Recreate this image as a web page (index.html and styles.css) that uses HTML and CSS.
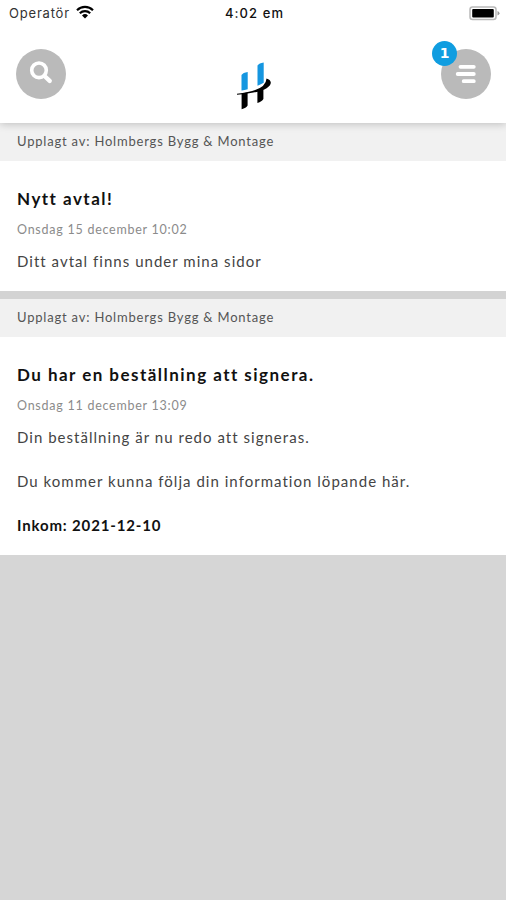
FILE: index.html
```html
<!DOCTYPE html>
<html lang="sv">
<head>
    <meta charset="UTF-8">
    <meta name="viewport" content="width=device-width, initial-scale=1.0">
    <title>Holmbergs Bygg &amp; Montage</title>
    <link rel="stylesheet" href="styles.css">
</head>
<body>
    <header class="header">
        <!-- Statusrad -->
        <div class="statusbar">
            <div class="status-left">
                <span class="operator">Operatör</span>
                <svg class="wifi" width="18" height="14" viewBox="0 0 18 14">
                    <path d="M1 5.2a11.500 11.500 0 0 1 16 0M3.800 8.200a7.500 7.500 0 0 1 10.400 0" fill="none" stroke="#000" stroke-width="2.2"/>
                    <path d="M9 13.500l-3-3.100a4.300 4.300 0 0 1 6 0z"/>
                </svg>
            </div>
            <div class="clock">4:02 em</div>
            <div class="status-right">
                <svg width="31" height="15" viewBox="0 0 31 15">
                    <rect x="1" y="1" width="26" height="12.5" rx="2.5" fill="#fff" stroke="#b9b9b9" stroke-width="1.5"/>
                    <rect x="3.2" y="3" width="21.6" height="8.6" rx="1"/>
                    <path d="M28.5 5v4.5q2-.8 2-2.250T28.500 5z" fill="#999"/>
                </svg>
            </div>
        </div>
        <div class="navbar">
            <button class="round-button" aria-label="Sök">
                <svg width="50" height="50" viewBox="0 0 50 50" fill="none" stroke="#fff">
                    <circle cx="23" cy="21.300" r="7.300" stroke-width="3.6"/>
                    <path d="M28.500 27l5.200 4.900" stroke-width="4.4" stroke-linecap="round"/>
                </svg>
            </button>
            <svg class="logo" width="36" height="48" viewBox="0 0 36 48">
                <path d="M5.500 13q1.600-2.400 6.200-3v17.200q-3 .8-6.200 1.300zM21.500 3.400q1.600-2.400 6.200-3v20.400q-2.700 1.500-6.200 2.900z" fill="#1596e0"/>
                <path d="M1 31.700Q30 29 30.500 16.500Q34.500 17.500 34.800 20.500C35 25.500 24 31.500 1 32.700z"/>
                <path d="M5.600 31.500l6-.9v13q-1.500 2.600-6 3.700zM21.400 28l6-2.600v11.600q-1.500 2.800-6 3.900z"/>
            </svg>
            <button class="round-button" aria-label="Meny">
                <svg width="50" height="50" viewBox="0 0 50 50" stroke="#fff" stroke-width="3.8" stroke-linecap="round">
                    <path d="M19.500 17.800h13.300M16.700 25h16.100M22.700 32.200h10.100"/>
                </svg>
                <span class="badge">1</span>
            </button>
        </div>
    </header>

    <main class="feed">
        <article class="post">
            <div class="post-author">Upplagt av: Holmbergs Bygg &amp; Montage</div>
            <div class="post-content">
                <h2 class="post-title">Nytt avtal!</h2>
                <div class="post-date">Onsdag 15 december 10:02</div>
                <p class="post-text">Ditt avtal finns under mina sidor</p>
            </div>
        </article>
        <article class="post">
            <div class="post-author">Upplagt av: Holmbergs Bygg &amp; Montage</div>
            <div class="post-content">
                <h2 class="post-title">Du har en beställning att signera.</h2>
                <div class="post-date">Onsdag 11 december 13:09</div>
                <p class="post-text">Din beställning är nu redo att signeras.</p>
                <p class="post-text">Du kommer kunna följa din information löpande här.</p>
                <p class="post-text received">Inkom: 2021-12-10</p>
            </div>
        </article>
    </main>
</body>
</html>
```

FILE: styles.css
```css
* {
    box-sizing: border-box;
}
body {
    margin: 0;
    min-height: 100vh;
    background: #d6d6d6;
    font-family: Lato, "Liberation Sans", sans-serif;
    color: #333;
}
.header {
    position: relative;
    z-index: 1;
    height: 123px;
    background: #fff;
    box-shadow: 0 1px 8px rgba(0, 0, 0, 0.22);
}
.statusbar {
    display: grid;
    grid-template-columns: 1fr auto 1fr;
    align-items: center;
    height: 26px;
    padding: 0 6px 0 9px;
    font-family: Inter, sans-serif;
    font-size: 13px;
}
.status-left {
    display: flex;
    align-items: center;
    gap: 6px;
}
.operator {
    letter-spacing: 0.8px;
}
.wifi {
    margin-top: -2px;
}
.clock {
    color: #111;
    font-weight: 500;
    letter-spacing: 1.1px;
}
.status-right {
    display: flex;
    justify-content: flex-end;
}
.navbar {
    display: flex;
    justify-content: space-between;
    height: 97px;
    padding: 23px 15px 0 16px;
}
.logo {
    margin-top: 13px;
}
.round-button {
    position: relative;
    width: 50px;
    height: 50px;
    padding: 0;
    border: 0;
    border-radius: 50%;
    background: #bababa;
}
.round-button svg {
    display: block;
}
.badge {
    position: absolute;
    top: -8px;
    left: -9px;
    width: 25px;
    height: 25px;
    border-radius: 50%;
    background: #109de0;
    color: #fff;
    font: bold 14px/25px "DejaVu Sans", sans-serif;
    text-align: center;
}
.post {
    background: #fff;
}
.post + .post {
    border-top: 8px solid #d3d3d3;
}
.post-author {
    height: 38px;
    padding-left: 17px;
    background: #f1f1f1;
    color: #555;
    font-size: 13px;
    line-height: 37px;
    letter-spacing: 0.8px;
}
.post-content {
    padding: 26px 17px 19px;
}
.post-title {
    margin: 0;
    color: #111;
    font-size: 17px;
    line-height: 24px;
    letter-spacing: 1.47px;
}
.post-date {
    margin-top: 8px;
    color: #8b8b8b;
    font-size: 12.5px;
    line-height: 22px;
    letter-spacing: 0.75px;
}
.post-text {
    margin: 9px 0 0;
    color: #444;
    font-size: 15px;
    line-height: 22px;
    letter-spacing: 1.03px;
}
.post-text + .post-text {
    margin-top: 22px;
}
.post-text.received {
    color: #111;
    font-weight: bold;
    letter-spacing: 0.85px;
}
```
